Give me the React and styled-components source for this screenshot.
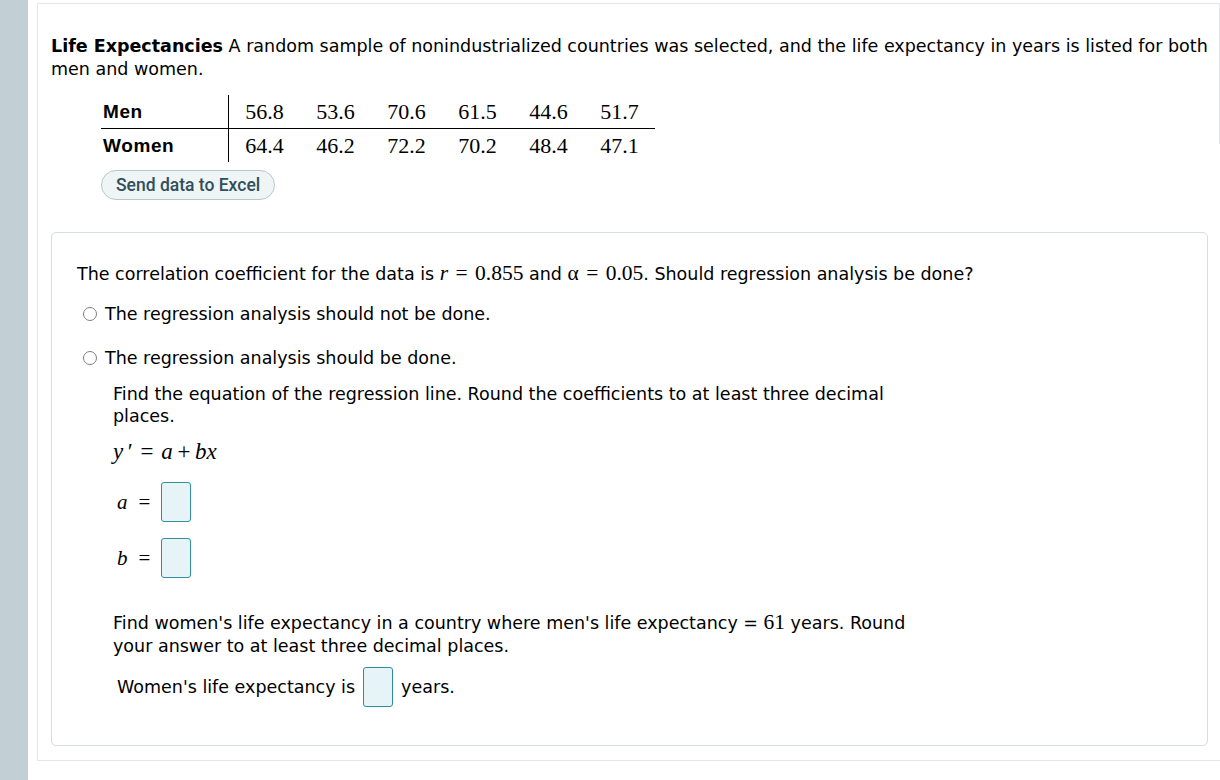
import React from 'react';
import styled, { createGlobalStyle } from 'styled-components';

const GlobalStyle = createGlobalStyle`
body {
  margin: 0;
  background: #fff;
  font-family: "DejaVu Sans", Verdana, sans-serif;
  color: #000;
}
`;

const Page = styled.div`
display: flex;
height: 780px;
overflow: hidden;
`;

const Sidebar = styled.div`
width: 28px;
flex: none;
background: #c2cfd4;
`;

const Main = styled.div`
flex: 1;
padding: 3px 0 0 9px;
`;

const OuterCard = styled.div`
position: relative;
border: 1px solid #e3e7e8;
border-right: none;
padding: 31px 12px 14px 13px;
&::after {
  content: '';
  position: absolute;
  right: 0;
  top: 0;
  width: 1px;
  height: 140px;
  background: #e3e7e8;
}
`;

const Intro = styled.p`
margin: 0 -6px 0 0;
font-size: 17.5px;
line-height: 23px;
b { font-weight: bold; }
`;

const DataTable = styled.table`
border-collapse: collapse;
margin: 14px 0 0 50px;
`;

const RowLabel = styled.th`
width: 125px;
height: 33px;
padding: 0 0 0 2px;
text-align: left;
font-family: "Liberation Sans", Arial, sans-serif;
font-weight: bold;
font-size: 19px;
letter-spacing: 0.6px;
border-right: 1px solid #000;
border-bottom: ${(p) => (p.$top ? '1px solid #000' : 'none')};
`;

const Cell = styled.td`
width: 71px;
padding: 0;
text-align: center;
font-family: "Liberation Serif", "Times New Roman", serif;
font-size: 22px;
border-bottom: ${(p) => (p.$top ? '1px solid #000' : 'none')};
`;

const ExcelButton = styled.button`
display: block;
margin: 8px 0 0 50px;
height: 30px;
padding: 0 14px;
border: 1px solid #b9c7cc;
border-radius: 15px;
background: #eff4f5;
color: #2f4f5c;
font-family: Roboto, "Liberation Sans", sans-serif;
font-size: 17.5px;
font-weight: 500;
`;

const InnerCard = styled.div`
margin-top: 32px;
border: 1px solid #d6dee1;
border-radius: 5px;
padding: 29px 25px 38px 25px;
font-size: 17.5px;
`;

const Line = styled.div`
line-height: ${(p) => p.$lh || 22}px;
margin-top: ${(p) => p.$gap || 0}px;
`;

const Math = styled.span`
font-family: "Liberation Serif", "Times New Roman", serif;
font-size: 21.5px;
word-spacing: 2px;
`;

const Var = styled.i`
font-family: "Liberation Serif", "Times New Roman", serif;
font-style: italic;
`;

const Options = styled.div`
display: flex;
flex-direction: column;
gap: 22px;
margin: 18px 0 0 6px;
`;

const Option = styled.label`
display: flex;
align-items: center;
gap: 8px;
line-height: 22px;
`;

const Radio = styled.span`
width: 12px;
height: 12px;
border: 1px solid #808080;
border-radius: 50%;
flex: none;
`;

const SubBlock = styled.div`
margin: 14px 0 0 36px;
width: 800px;
`;

const Equation = styled.div`
margin-top: 11px;
font-family: "Liberation Serif", "Times New Roman", serif;
font-size: 23px;
line-height: 28px;
word-spacing: 2px;
`;

const VarRow = styled.div`
display: flex;
align-items: center;
gap: 11px;
margin-top: ${(p) => p.$gap}px;
padding-left: 4px;
font-family: "Liberation Serif", "Times New Roman", serif;
font-size: 21px;
`;

const AnswerBox = styled.span`
display: inline-block;
width: 28px;
height: 38px;
border: 1px solid #2f8e9c;
border-radius: 3px;
background: #e6f3f7;
vertical-align: middle;
`;

const Sentence = styled.div`
margin-top: ${(p) => p.$gap}px;
display: flex;
align-items: center;
gap: 8px;
padding-left: 4px;
`;

const data = {
  men: ['56.8', '53.6', '70.6', '61.5', '44.6', '51.7'],
  women: ['64.4', '46.2', '72.2', '70.2', '48.4', '47.1'],
};

export default function App() {
  return (
    <Page>
      <GlobalStyle />
      <Sidebar />
      <Main>
        <OuterCard>
          <Intro>
            <b>Life Expectancies</b> A random sample of nonindustrialized countries was selected, and the life expectancy in years is listed for both men and women.
          </Intro>
          <DataTable>
            <tbody>
              <tr>
                <RowLabel $top>Men</RowLabel>
                {data.men.map((v, i) => <Cell key={i} $top>{v}</Cell>)}
              </tr>
              <tr>
                <RowLabel>Women</RowLabel>
                {data.women.map((v, i) => <Cell key={i}>{v}</Cell>)}
              </tr>
            </tbody>
          </DataTable>
          <ExcelButton>Send data to Excel</ExcelButton>

          <InnerCard>
            <Line>
              The correlation coefficient for the data is <Math><Var>r</Var> = 0.855</Math> and <Math>α = 0.05</Math>. Should regression analysis be done?
            </Line>
            <Options>
              <Option><Radio />The regression analysis should not be done.</Option>
              <Option><Radio />The regression analysis should be done.</Option>
            </Options>
            <SubBlock>
              <Line>Find the equation of the regression line. Round the coefficients to at least three decimal places.</Line>
              <Equation><Var>y</Var>&thinsp;′ = <Var>a</Var>&thinsp;+&thinsp;<Var>bx</Var></Equation>
              <VarRow $gap={16}><Var>a</Var>=<AnswerBox /></VarRow>
              <VarRow $gap={16}><Var>b</Var>=<AnswerBox /></VarRow>
              <Line $gap={33} $lh={23}>
                Find women's life expectancy in a country where men's life expectancy = <Math>61</Math> years. Round your answer to at least three decimal places.
              </Line>
              <Sentence $gap={9}>Women's life expectancy is <AnswerBox /> years.</Sentence>
            </SubBlock>
          </InnerCard>
        </OuterCard>
      </Main>
    </Page>
  );
}
